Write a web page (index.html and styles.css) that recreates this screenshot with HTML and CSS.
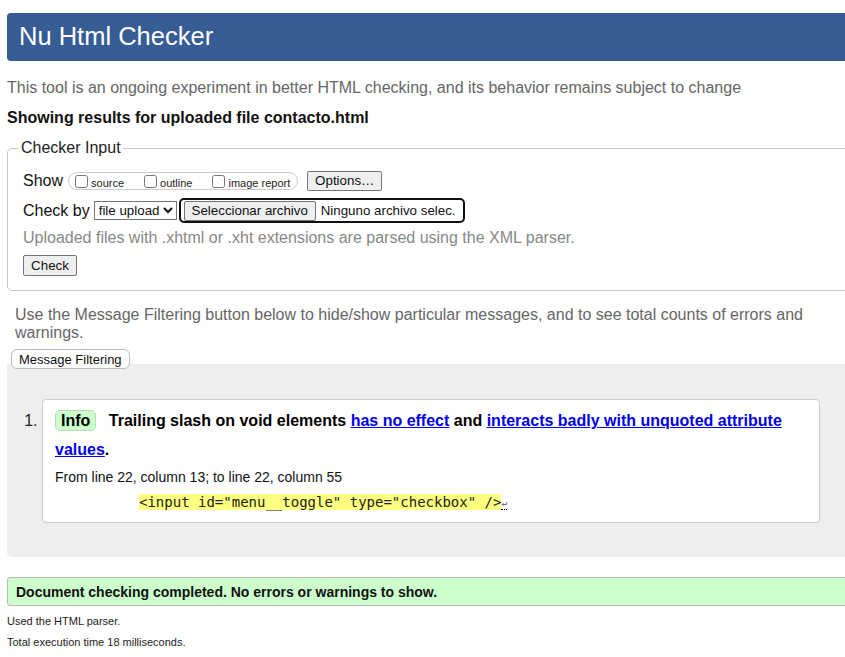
FILE: index.html
```html
<!DOCTYPE html>
<html lang="en">
<head>
<meta charset="utf-8">
<title>Nu Html Checker</title>
<link rel="stylesheet" href="styles.css">
</head>
<body>
<div class="page">
  <h1 class="title">Nu Html Checker</h1>
  <p class="intro">This tool is an ongoing experiment in better HTML checking, and its behavior remains subject to change</p>
  <p class="showing">Showing results for uploaded file contacto.html</p>

  <fieldset class="checker">
    <legend class="legend">Checker Input</legend>
    <div class="row row-show">
      <span class="label">Show</span>
      <span class="show-group">
        <label class="opt"><input type="checkbox" class="cb"><span>source</span></label>
        <label class="opt"><input type="checkbox" class="cb"><span>outline</span></label>
        <label class="opt"><input type="checkbox" class="cb"><span>image report</span></label>
      </span>
      <button class="btn btn-options" type="button">Options…</button>
    </div>
    <div class="row row-checkby">
      <span class="label">Check by</span>
      <select class="select"><option>file upload</option></select>
      <span class="file-box">
        <button class="btn btn-file" type="button">Seleccionar archivo</button>
        <span class="file-name">Ninguno archivo selec.</span>
      </span>
    </div>
    <p class="hint">Uploaded files with .xhtml or .xht extensions are parsed using the XML parser.</p>
    <div class="row row-check">
      <button class="btn btn-check" type="button">Check</button>
    </div>
  </fieldset>

  <p class="filter-note">Use the Message Filtering button below to hide/show particular messages, and to see total counts of errors and warnings.</p>
  <button class="btn-filter" type="button">Message Filtering</button>

  <div class="results">
    <ol class="messages">
      <li class="message">
        <p class="msg-text"><span class="badge">Info</span> Trailing slash on void elements <a href="#">has no effect</a> and <a href="#">interacts badly with unquoted attribute values</a>.</p>
        <p class="location">From line 22, column 13; to line 22, column 55</p>
        <p class="extract"><code class="code"><mark class="hl">&lt;input id="menu__toggle" type="checkbox" /&gt;</mark><span class="lf">↩</span></code></p>
      </li>
    </ol>
  </div>

  <p class="success">Document checking completed. No errors or warnings to show.</p>
  <p class="small small-first">Used the HTML parser.</p>
  <p class="small">Total execution time 18 milliseconds.</p>
</div>
</body>
</html>
```

FILE: styles.css
```css
html, body {
  margin: 0;
  padding: 0;
  background: #fff;
  overflow-x: hidden;
}

body {
  font-family: "Liberation Sans", Arial, sans-serif;
  color: #000;
}

.page {
  margin-left: 7px;
  width: 848px;
  padding-top: 13px;
}

.title {
  margin: 0;
  height: 46px;
  line-height: 46px;
  padding: 0 12px 2px;
  background: #365d95;
  color: #fff;
  font-size: 25.5px;
  font-weight: normal;
  border-radius: 4px;
}

.intro {
  margin: 18px 0 0;
  font-size: 16px;
  line-height: 18px;
  color: #666;
}

.showing {
  margin: 12px 0 0;
  font-size: 16px;
  line-height: 18px;
  font-weight: bold;
  color: #111;
}

.checker {
  margin: 12px 0 0;
  padding: 0 15px 14px;
  border: 1px solid #c8c8c8;
  border-radius: 5px;
  min-width: 0;
}

.legend {
  padding: 0 2px;
  margin-left: -4px;
  font-size: 16px;
  line-height: 18px;
  color: #222;
}

.row {
  display: flex;
  align-items: center;
}

.label {
  font-size: 16px;
  line-height: 18px;
  color: #111;
}

.row-show {
  margin-top: 12px;
  height: 24px;
}

.show-group {
  display: inline-flex;
  align-items: center;
  height: 16px;
  margin-left: 5px;
  padding: 0 7px 0 6px;
  border: 1px solid #ccc;
  border-radius: 9px;
}

.opt {
  display: inline-flex;
  align-items: center;
  font-size: 11px;
  color: #222;
  margin-right: 20px;
}

.opt:last-child {
  margin-right: 0;
}

.opt span {
  padding-top: 3px;
}

.cb {
  width: 13px;
  height: 13px;
  margin: 0 3px 0 0;
}

.btn {
  font-family: "Liberation Sans", Arial, sans-serif;
  font-size: 13.33px;
  line-height: 16px;
  color: #111;
  background: #efefef;
  border: 1px solid #767676;
  border-radius: 2px;
  padding: 1px 6px;
  margin: 0;
}

.btn-options {
  margin-left: 9px;
  width: 75px;
  height: 20px;
  padding: 0;
}

.row-checkby {
  margin-top: 4px;
  height: 27px;
}

.select {
  margin-left: 4px;
  width: 83px;
  height: 19px;
  font-family: "Liberation Sans", Arial, sans-serif;
  font-size: 13.33px;
  color: #111;
  border: 1px solid #767676;
  border-radius: 0;
  padding: 0;
  background: #fff;
}

.file-box {
  display: inline-flex;
  align-items: center;
  margin-left: 2px;
  height: 21px;
  padding: 0 7px 0 3px;
  border: 2px solid #101010;
  border-radius: 5px;
}

.btn-file {
  height: 20px;
  width: 132px;
  padding: 0;
}

.file-name {
  margin-left: 5px;
  font-size: 13.33px;
  color: #111;
}

.hint {
  margin: 5px 0 0;
  font-size: 16px;
  line-height: 18px;
  color: #888;
}

.row-check {
  margin-top: 8px;
}

.btn-check {
  width: 54px;
  height: 21px;
  padding: 0;
}

.filter-note {
  margin: 15px 0 0 8px;
  font-size: 16px;
  line-height: 18px;
  color: #666;
}

.btn-filter {
  position: relative;
  z-index: 1;
  display: block;
  margin: 7px 0 -5px 4px;
  height: 20px;
  padding: 0 7px;
  font-family: "Liberation Sans", Arial, sans-serif;
  font-size: 13px;
  color: #111;
  background: #fff;
  border: 1px solid #bbb;
  border-radius: 6px;
}

.results {
  background: #eee;
  border-radius: 0 0 0 5px;
  padding: 35px 0 34px;
}

.messages {
  margin: 0;
  padding: 0 35px;
  font-size: 16px;
}

.message {
  background: #fff;
  border: 1px solid #ccc;
  border-radius: 4px;
  padding: 6px 12px 10px;
  color: #333;
}

.message::marker {
  color: #222;
}

.msg-text {
  margin: 0;
  font-weight: bold;
  line-height: 29px;
  color: #000;
}

.msg-text a {
  color: #00e;
  text-decoration: underline;
}

.badge {
  display: inline-block;
  line-height: 19px;
  padding: 0 5px;
  margin-right: 8px;
  background: #ccffcc;
  border: 1px solid #b6deb6;
  border-radius: 5px;
  color: #000;
}

.location {
  margin: 5px 0 0;
  font-size: 14px;
  line-height: 16px;
  color: #111;
}

.extract {
  margin: 8px 0 0;
  padding-left: 84px;
  line-height: 17px;
}

.code {
  font-family: "DejaVu Sans Mono", monospace;
  font-size: 14px;
  color: #222;
}

.hl {
  background: #ffff80;
  color: #222;
}

.lf {
  font-size: 10px;
  color: #555;
  border-bottom: 1px dotted #000;
}

.success {
  margin: 20px 0 0;
  height: 27px;
  line-height: 29px;
  padding: 0 8px;
  font-size: 14px;
  font-weight: bold;
  background: #ccffcc;
  border: 1px solid #bbb;
  border-radius: 3px;
  color: #111;
  overflow: hidden;
}

.small {
  margin: 8px 0 0;
  font-size: 11px;
  line-height: 13px;
  color: #222;
}

.small-first {
  margin-top: 9px;
}
```
